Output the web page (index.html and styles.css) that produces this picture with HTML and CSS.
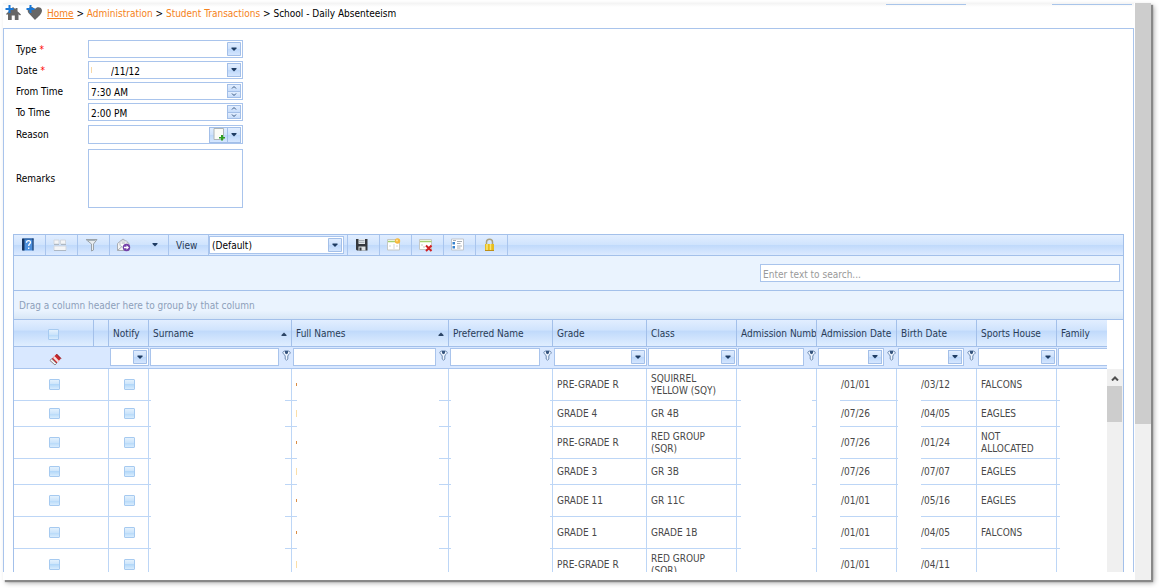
FILE: index.html
```
<!DOCTYPE html>
<html lang="en">
<head>
<meta charset="utf-8">
<title>School - Daily Absenteeism</title>
<link rel="stylesheet" href="styles.css">
</head>
<body>
<svg class="defs" aria-hidden="true">
  <symbol id="pin" viewBox="0 0 9 11"><path d="M.8 2.6C.8 1.500 2.400.8 4.500.8s3.700.7 3.700 1.800c0 1.500-2.400 2.200-2.400 3.400v3l-1.300 1.300L3.200 9V6C3.200 4.800.8 4.100.8 2.600z" fill="#eef5ff" stroke="#6d8ab0"/><path d="M3 1h3v2.200l-1.500 1L3 3.200z" fill="#35547d"/></symbol>
  <symbol id="down" viewBox="0 0 6 4"><path d="M.5 0h5v1L3 3.500.5 1z" fill="#1f3c63"/></symbol>
  <symbol id="up" viewBox="0 0 6 4"><path d="M3 .5l2.500 2.500v1h-5V3z" fill="#2c4566"/></symbol>
</svg>
<div class="window">
  <main class="page">
    <header class="crumbs">
      <svg class="crumb-icon" viewBox="0 0 16 16" aria-hidden="true"><path d="M8 2l2.500 2.300V3h2v3.200L16 9.500l-1 1-1.500-1.300V15h-3.700v-4.500H6.700V15H3V9L2 10 1 9z" fill="#666"/><path d="M3.500 0h2v3h3v2h-3v3h-2V5h-3V3h3z" fill="#1878d8"/></svg>
      <svg class="crumb-icon" viewBox="0 0 16 16" aria-hidden="true"><path d="M9 15L2.500 8C0 4 4 1 7 2.500L9 4c2-3 7-2 7 1.500C16 9 12 12 9 15z" fill="#666"/><path d="M3.500 0h2v3h3v2h-3v3h-2V5h-3V3h3z" fill="#1878d8"/></svg>
      <nav class="trail"><a class="home" href="#">Home</a> &gt; <a href="#">Administration</a> &gt; <a href="#">Student Transactions</a> &gt; School - Daily Absenteeism</nav>
      <span class="tab-edge"></span><span class="tab-edge last"></span>
    </header>
    <section class="panel">
      <form class="form">
        <label for="type">Type <b>*</b></label>
        <select id="type" class="box drop"><option></option></select>
        <label for="date">Date <b>*</b></label>
        <div class="box combo"><i class="sliver"></i><input id="date" class="date" value="/11/12"><button type="button" class="open" aria-label="Open calendar"><svg><use href="#down"/></svg></button></div>
        <label for="from">From Time</label>
        <div class="box combo"><input id="from" value="7:30 AM"><span class="spin"><button type="button" aria-label="Later"><svg viewBox="0 0 6 3"><path d="M1 2.500l2-2 2 2"/></svg></button><button type="button" aria-label="Earlier"><svg viewBox="0 0 6 3"><path d="M1 .5l2 2 2-2"/></svg></button></span></div>
        <label for="to">To Time</label>
        <div class="box combo"><input id="to" value="2:00 PM"><span class="spin"><button type="button" aria-label="Later"><svg viewBox="0 0 6 3"><path d="M1 2.500l2-2 2 2"/></svg></button><button type="button" aria-label="Earlier"><svg viewBox="0 0 6 3"><path d="M1 .5l2 2 2-2"/></svg></button></span></div>
        <label for="reason">Reason</label>
        <div class="box combo reason"><input id="reason"><button type="button" class="open add" aria-label="Add reason"><svg viewBox="0 0 12 13"><path d="M1 .5h9.500v11H1z" fill="#fbfbf6" stroke="#aeb6b8"/><path d="M8 7h2v2h2v1.500h-2v2H8v-2H6V9h2z" fill="#2f9e22"/></svg></button><button type="button" class="open" aria-label="Open list"><svg><use href="#down"/></svg></button></div>
        <label for="remarks">Remarks</label>
        <textarea id="remarks" class="box"></textarea>
      </form>
      <div class="grid">
        <div class="toolbar">
          <button class="tool" aria-label="Help"><svg viewBox="0 0 16 16"><path d="M3 1.500h10.500v12H3z" fill="#4c8fdc"/><path d="M2 1.500h2.500v12H2z" fill="#16345f"/><path d="M4.500 1.500h9v1h-9z" fill="#1d4a88"/><path d="M12.500 1.500h1v12h-1z" fill="#16345f"/><path d="M6.500 5.700c0-3 4.500-2.700 4 0-.2 1.200-1.800 1.300-1.800 3.300M8.700 10.500v1.500" fill="none" stroke="#fff" stroke-width="1.300"/></svg></button>
          <button class="tool" aria-label="Columns"><svg viewBox="0 0 16 16"><path d="M2 3h5v4H2zM8.500 3h5v4h-5zM2 9h12v4.500H2z" fill="#f4f5f7" stroke="#d3d8df"/><path d="M2 7.500h5M9 7.500h5M2 13.500h12" stroke="#aeb8c4"/></svg></button>
          <button class="tool" aria-label="Filter"><svg viewBox="0 0 16 16"><path d="M2 2.500h11L9.500 7v6l-2 1V7z" fill="#e9edf0" stroke="#9aa2a8"/><path d="M3.500 3.500h8" stroke="#a7b2b8"/></svg></button>
          <button class="tool export" aria-label="Export"><svg viewBox="0 0 16 16"><path d="M1.500 6.500L7 2l6 4.500v7H1.500z" fill="#f4f4f4" stroke="#a8adb5"/><path d="M4 4h7v4.500l-3.500 2L4 8.500z" fill="#fff" stroke="#b8bfca"/><path d="M5.500 6h4M1.500 13.500L6 9.500" stroke="#a8adb5"/><circle cx="10.500" cy="10.500" r="3.700" fill="#7440a8"/><path d="M8 9.700h2.500V8.200l2.500 2.300-2.500 2.300v-1.500H8z" fill="#fff"/></svg><svg class="arrow"><use href="#down"/></svg></button>
          <label class="view" for="view">View</label>
          <span class="view-box"><select id="view" class="box drop"><option>(Default)</option></select></span>
          <button class="tool" aria-label="Save"><svg viewBox="0 0 16 16"><path d="M2 2h11.500v11.500H3l-1-1z" fill="#35383d"/><path d="M4.500 2h6.500v5H4.500z" fill="#e3e6e9"/><path d="M5 3.500h5.500M5 5.300h5.500" stroke="#a6adb4"/><path d="M4.500 9.500h7v4h-7z" fill="#dfe2e4"/><path d="M5.500 10.500h2v3h-2z" fill="#35383d"/></svg></button>
          <button class="tool" aria-label="New view"><svg viewBox="0 0 16 16"><path d="M1.500 2.500h12v10.500h-12z" fill="#fff" stroke="#c5c8c5"/><path d="M2 4.500h11.500" stroke="#a5d070" stroke-width="1.500"/><path d="M8 7v5M3 9h2M10 9h2" stroke="#d2d5d8"/><circle cx="11.500" cy="4" r="2.700" fill="#f6b83c"/><circle cx="11" cy="3.500" r="1" fill="#ffe69a"/></svg></button>
          <button class="tool" aria-label="Delete view"><svg viewBox="0 0 16 16"><path d="M1.500 2.500h12v10h-12z" fill="#fff" stroke="#c5c8c5"/><path d="M2 4.500h11.500" stroke="#a5d070" stroke-width="1.500"/><path d="M3 8h2M5 10h2" stroke="#c4c7ca"/><path d="M8 8.500l5.500 5.500M13.500 8.500L8 14" stroke="#cf1f24" stroke-width="2"/></svg></button>
          <button class="tool" aria-label="Field list"><svg viewBox="0 0 16 16"><path d="M1.500 2h12v11h-12z" fill="#fff" stroke="#c0c5cc"/><path d="M2.500 5h2.500v2.500H2.500zM2.500 9h2.500v2.500H2.500z" fill="#3682ce"/><path d="M3 3.500h3M7 4.500h5M7 6.500h3.500M7 9h5M7 11h3.500" stroke="#a8afb6"/></svg></button>
          <button class="tool" aria-label="Lock"><svg viewBox="0 0 16 16"><path d="M4.500 8V5c0-3.800 6-3.800 6 0V8" fill="none" stroke="#aaa07c" stroke-width="1.500"/><path d="M3 7h9v6.500H3z" fill="#e7bd20"/><path d="M5 7v6.500M8.500 7v6.500" stroke="#f9e67c" stroke-width="1.500"/><path d="M3 13.500h9" stroke="#bd8f16"/></svg></button>
        </div>
        <div class="search"><input class="box" type="text" placeholder="Enter text to search..." aria-label="Search"></div>
        <div class="group">Drag a column header here to group by that column</div>
        <div class="data">
          <div class="view-port">
            <table>
              <colgroup><col class="w80"><col class="w15"><col class="w40"><col class="w143"><col class="w157"><col class="w104"><col class="w94"><col class="w90"><col class="w80"><col class="w80"><col class="w80"><col class="w80"><col></colgroup>
              <thead>
                <tr class="heads"><th><input type="checkbox" aria-label="Select all"></th><th></th><th>Notify</th><th><div class="sorted">Surname<svg><use href="#up"/></svg></div></th><th><div class="sorted">Full Names<svg><use href="#up"/></svg></div></th><th>Preferred Name</th><th>Grade</th><th>Class</th><th>Admission Number</th><th>Admission Date</th><th>Birth Date</th><th>Sports House</th><th>Family</th></tr>
                <tr class="filters">
                  <td colspan="2"><button class="erase" aria-label="Clear filter"><svg viewBox="0 0 13 13"><path d="M7.500 1L12 5.500 6 12 1 7.500z" fill="#c9242a"/><path d="M5.500 3L10 7.800 8.500 9.500 4 5z" fill="#f6dddd"/><path d="M1 7.500L6 12l1.500-1.500-5-4.700z" fill="#f8f8f8" stroke="#8d9096"/><path d="M7.500 1L12 5.500" stroke="#7e1518"/></svg></button></td>
                  <td><select class="box drop" aria-label="Notify"><option></option></select></td>
                  <td><div class="pinned"><input class="box" aria-label="Surname"><svg><use href="#pin"/></svg></div></td>
                  <td><div class="pinned"><input class="box" aria-label="Full Names"><svg><use href="#pin"/></svg></div></td>
                  <td><div class="pinned"><input class="box" aria-label="Preferred Name"><svg><use href="#pin"/></svg></div></td>
                  <td><select class="box drop" aria-label="Grade"><option></option></select></td>
                  <td><select class="box drop" aria-label="Class"><option></option></select></td>
                  <td><div class="pinned"><input class="box" aria-label="Admission Number"><svg><use href="#pin"/></svg></div></td>
                  <td><div class="pinned"><div class="box combo"><input aria-label="Admission Date"><button class="open" aria-label="Open calendar"><svg><use href="#down"/></svg></button></div><svg><use href="#pin"/></svg></div></td>
                  <td><div class="pinned"><div class="box combo"><input aria-label="Birth Date"><button class="open" aria-label="Open calendar"><svg><use href="#down"/></svg></button></div><svg><use href="#pin"/></svg></div></td>
                  <td><select class="box drop" aria-label="Sports House"><option></option></select></td>
                  <td class="cut"><input class="box" aria-label="Family"></td>
                </tr>
              </thead>
              <tbody>
                <tr class="tall"><td><input type="checkbox" aria-label="Select"></td><td></td><td><input type="checkbox" aria-label="Notify"></td><td></td><td><i class="mark dot"></i></td><td></td><td>PRE-GRADE R</td><td>SQUIRREL YELLOW (SQY)</td><td></td><td class="part">/01/01</td><td class="part">/03/12</td><td>FALCONS</td><td></td></tr>
                <tr><td><input type="checkbox" aria-label="Select"></td><td></td><td><input type="checkbox" aria-label="Notify"></td><td></td><td><i class="mark"></i></td><td></td><td>GRADE 4</td><td>GR 4B</td><td></td><td class="part">/07/26</td><td class="part">/04/05</td><td>EAGLES</td><td></td></tr>
                <tr class="tall"><td><input type="checkbox" aria-label="Select"></td><td></td><td><input type="checkbox" aria-label="Notify"></td><td></td><td><i class="mark dot"></i></td><td></td><td>PRE-GRADE R</td><td>RED GROUP (SQR)</td><td></td><td class="part">/07/26</td><td class="part">/01/24</td><td>NOT ALLOCATED</td><td></td></tr>
                <tr><td><input type="checkbox" aria-label="Select"></td><td></td><td><input type="checkbox" aria-label="Notify"></td><td></td><td><i class="mark"></i></td><td></td><td>GRADE 3</td><td>GR 3B</td><td></td><td class="part">/07/26</td><td class="part">/07/07</td><td>EAGLES</td><td></td></tr>
                <tr class="tall"><td><input type="checkbox" aria-label="Select"></td><td></td><td><input type="checkbox" aria-label="Notify"></td><td></td><td><i class="mark dot"></i></td><td></td><td>GRADE 11</td><td>GR 11C</td><td></td><td class="part">/01/01</td><td class="part">/05/16</td><td>EAGLES</td><td></td></tr>
                <tr class="tall"><td><input type="checkbox" aria-label="Select"></td><td></td><td><input type="checkbox" aria-label="Notify"></td><td></td><td><i class="mark dot"></i></td><td></td><td>GRADE 1</td><td>GRADE 1B</td><td></td><td class="part">/01/01</td><td class="part">/04/05</td><td>FALCONS</td><td></td></tr>
                <tr class="tall"><td><input type="checkbox" aria-label="Select"></td><td></td><td><input type="checkbox" aria-label="Notify"></td><td></td><td><i class="mark"></i></td><td></td><td>PRE-GRADE R</td><td>RED GROUP (SQR)</td><td></td><td class="part">/01/01</td><td class="part">/04/11</td><td></td><td></td></tr>
              </tbody>
            </table>
            <div class="mask m-surname"></div><div class="mask m-names"></div><div class="mask m-preferred"></div><div class="mask m-number"></div><div class="mask m-admitted"></div><div class="mask m-born"></div><div class="mask m-family"></div>
          </div>
          <div class="track"><svg viewBox="0 0 8 5"><path d="M1 4.500l3-3 3 3" fill="none" stroke="#505050" stroke-width="2"/></svg><span class="thumb"></span></div>
        </div>
      </div>
    </section>
  </main>
  <div class="page-scroll"><span class="page-thumb"></span></div>
</div>
</body>
</html>
```
FILE: styles.css
```
* { box-sizing: border-box; }
html, body { height: 100%; }
body {
  margin: 0;
  padding: 3px 8px 8px 3px;
  background: #fff;
  color: #000;
  font: 10px/12px "DejaVu Sans Condensed", "DejaVu Sans", sans-serif;
  overflow: hidden;
}
input, select, textarea, button { font: inherit; color: inherit; margin: 0; border-radius: 0; }
input, textarea { outline: 0; }
button { padding: 0; border: 0; background: none; }
svg { display: block; flex: none; }
.defs { position: absolute; width: 0; height: 0; }

.window {
  display: flex;
  height: 100%;
  background: #fff;
  box-shadow: 2px 2px 1px #888, 3px 3px 5px #aaa;
}
.page { flex: 1; min-width: 0; display: flex; flex-direction: column; padding-bottom: 8px; }
.page-scroll { width: 17px; border-left: 1px solid #fff; background: #f0f0f0; }
.page-thumb { display: block; height: 73%; background: #cdcdcd; }

.crumbs { display: flex; align-items: flex-start; gap: 5px; height: 25px; padding: 0 2px; background: linear-gradient(#f3f3f3, #fff 4px); }
.crumb-icon { width: 16px; height: 16px; margin-top: 2px; }
.trail { flex: 1; padding-top: 5px; }
.trail a { color: #f58220; text-decoration: none; }
.trail .home { text-decoration: underline; }
.tab-edge { width: 80px; height: 1px; margin: 1px 81px 0 0; background: #a9c5ea; }
.tab-edge.last { margin-right: 0; }

.panel {
  flex: 1;
  min-height: 0;
  display: flex;
  flex-direction: column;
  gap: 26px;
  padding: 11px 9px 0;
  border: 1px solid #a9c4ec;
  border-bottom: 0;
}
.form { display: grid; grid-template-columns: 72px 155px; row-gap: 3px; align-items: center; padding-left: 3px; }
.form label { padding-top: 2px; }
.form b { color: #f00; font-weight: normal; }
.box { border: 1px solid #a9c4ec; background-color: #fff; height: 18px; width: 100%; min-width: 0; padding: 0 2px; }
textarea.box { height: 59px; margin-top: 2px; resize: none; display: block; }
.drop {
  display: block;
  appearance: none;
  padding-top: 2px;
  background: #fff url("data:image/svg+xml,%3Csvg xmlns='http://www.w3.org/2000/svg' width='14' height='14'%3E%3ClinearGradient id='g' x2='0' y2='1'%3E%3Cstop stop-color='%23e2eeff'/%3E%3Cstop offset='.5' stop-color='%23cde1fc'/%3E%3Cstop offset='.5' stop-color='%23bcd7fa'/%3E%3Cstop offset='1' stop-color='%23d6e7ff'/%3E%3C/linearGradient%3E%3Cpath d='M.5.5h13v13H.5z' fill='url(%23g)' stroke='%23a3bfe8'/%3E%3Cpath d='M4.500 5.500h5v1L7 9 4.500 6.500z' fill='%231f3c63'/%3E%3C/svg%3E") no-repeat right 1px center;
}
.combo { display: flex; align-items: center; padding: 0 1px 0 0; }
.combo input { flex: 1; min-width: 0; width: 0; height: 16px; padding: 2px 2px 0; border: 0; background: none; }
.combo .date { padding-left: 19px; }
.sliver { width: 1px; height: 6px; margin-left: 2px; background: #f7d9a8; }
.open {
  display: grid;
  place-items: center;
  width: 14px;
  height: 14px;
  border: 1px solid #a3bfe8;
  background: linear-gradient(#e2eeff, #cde1fc 50%, #bcd7fa 50%, #d6e7ff);
}
.open svg { width: 6px; height: 4px; }
.reason { height: 19px; margin-top: 1px; }
.reason .open { height: 16px; }
.reason .add { width: 18px; border-right: 0; }
.add svg { width: 12px; height: 13px; }
.spin { display: grid; width: 14px; height: 14px; border: 1px solid #a3bfe8; }
.spin button { display: grid; place-items: center; background: linear-gradient(#e2eeff, #c6dcfb); }
.spin button + button { border-top: 1px solid #a3bfe8; }
.spin svg { width: 6px; height: 3px; fill: none; stroke: #35547d; overflow: visible; }

.grid { flex: 1; min-height: 0; display: flex; flex-direction: column; border: 1px solid #a3c0ea; border-bottom: 0; color: #283b56; }
.toolbar { display: flex; height: 21px; border-bottom: 1px solid #a3c0ea; background: linear-gradient(#e2eeff, #cfe3fd 50%, #bfd9fb 50%, #dceaff); }
.tool { display: flex; align-items: center; width: 32px; padding-left: 6px; border-right: 1px solid #a9c5ee; }
.tool svg { width: 16px; height: 16px; }
.export { width: 59px; gap: 20px; }
.export .arrow { width: 6px; height: 4px; }
.view { width: 40px; padding: 5px 0 0 7px; border-right: 1px solid #a9c5ee; }
.view-box { width: 139px; padding: 1px 3px 0 0; border-right: 1px solid #a9c5ee; }
.view-box .box { color: #000; }
.search { display: flex; justify-content: flex-end; padding: 8px 3px; border-bottom: 1px solid #a3c0ea; background: #eaf3fe; }
.search .box { width: 360px; padding-top: 2px; color: #000; }
.search .box::placeholder { color: #999; opacity: 1; }
.group { height: 29px; padding: 9px 5px 0; border-bottom: 1px solid #a3c0ea; background: linear-gradient(#eaf3fe 70%, #d8e7f7); color: #8d9fba; }

.data { flex: 1; min-height: 0; display: flex; }
.view-port { position: relative; flex: 1; min-width: 0; overflow: hidden; }
table { width: 100%; table-layout: fixed; border-collapse: separate; border-spacing: 0; }
.w15 { width: 15px; } .w40 { width: 40px; } .w80 { width: 80px; } .w90 { width: 90px; } .w94 { width: 94px; }
.w104 { width: 104px; } .w143 { width: 143px; } .w157 { width: 157px; }
th, td { padding: 0 4px; border: 0 solid #bdd6f6; border-width: 0 1px 1px 0; text-align: left; font-weight: normal; }
th:last-child, td:last-child { border-right: 0; }
.heads th { height: 27px; padding-top: 2px; border-color: #a3c0ea; background: linear-gradient(#e2eeff, #cfe3fd 40%, #bfd9fb 41%, #e0eeff); white-space: nowrap; overflow: hidden; }
.sorted { display: flex; justify-content: space-between; align-items: center; }
.sorted svg { width: 6px; height: 4px; }
.filters td { height: 22px; padding: 0 0 2px 1px; border-color: #a9c5ee; border-right: 0; background: #d9e8ff; }
.filters .box { height: 18px; }
.filters td.cut { padding-right: 0; }
.cut .box { border-right: 0; display: block; }
.pinned { display: flex; gap: 3px; padding-right: 1px; }
.pinned .box { flex: 1; }
.pinned svg { width: 9px; height: 11px; margin-top: 2px; }
.pinned .open svg { width: 6px; height: 4px; margin: 0; }
.erase { display: block; margin: 5px auto 0 34px; }
.erase svg { width: 13px; height: 13px; }
tbody td { height: 26px; color: #484848; }
tbody .tall td { height: 32px; }
th:first-child, tbody td:first-child, tbody td:nth-child(3) { text-align: center; }
tbody td:first-child { border-right: 0; }
tbody td:nth-child(3) { padding-left: 6px; }
tbody .part { padding-left: 24px; }
input[type="checkbox"] { display: block; appearance: none; width: 11px; height: 11px; margin: 0 auto; border: 1px solid #a6caf0; border-radius: 1px; background: linear-gradient(#e3f1fd, #cbe4fb 50%, #b3d8f9 50%, #d8ecfd); }
.mark { display: block; width: 1px; height: 7px; background: #fbdfa8; }
.mark.dot { height: 3px; background: #d98d45; }

.mask { position: absolute; top: 49px; bottom: 0; background: #fff; }
.m-surname { left: 137px; width: 134px; }
.m-names { left: 283px; width: 142px; }
.m-preferred { left: 437px; width: 99px; }
.m-number { left: 727px; width: 71px; }
.m-admitted { left: 803px; width: 23px; }
.m-born { left: 884px; width: 23px; }
.m-family { left: 1046px; right: 0; }
.track { display: flex; flex-direction: column; align-items: center; width: 16px; margin-top: 49px; padding: 7px 0 0; background: #f0f0f0; }
.track svg { width: 8px; height: 5px; margin-bottom: 5px; }
.thumb { width: 15px; height: 36px; margin-right: 1px; background: #cdcdcd; }
```
